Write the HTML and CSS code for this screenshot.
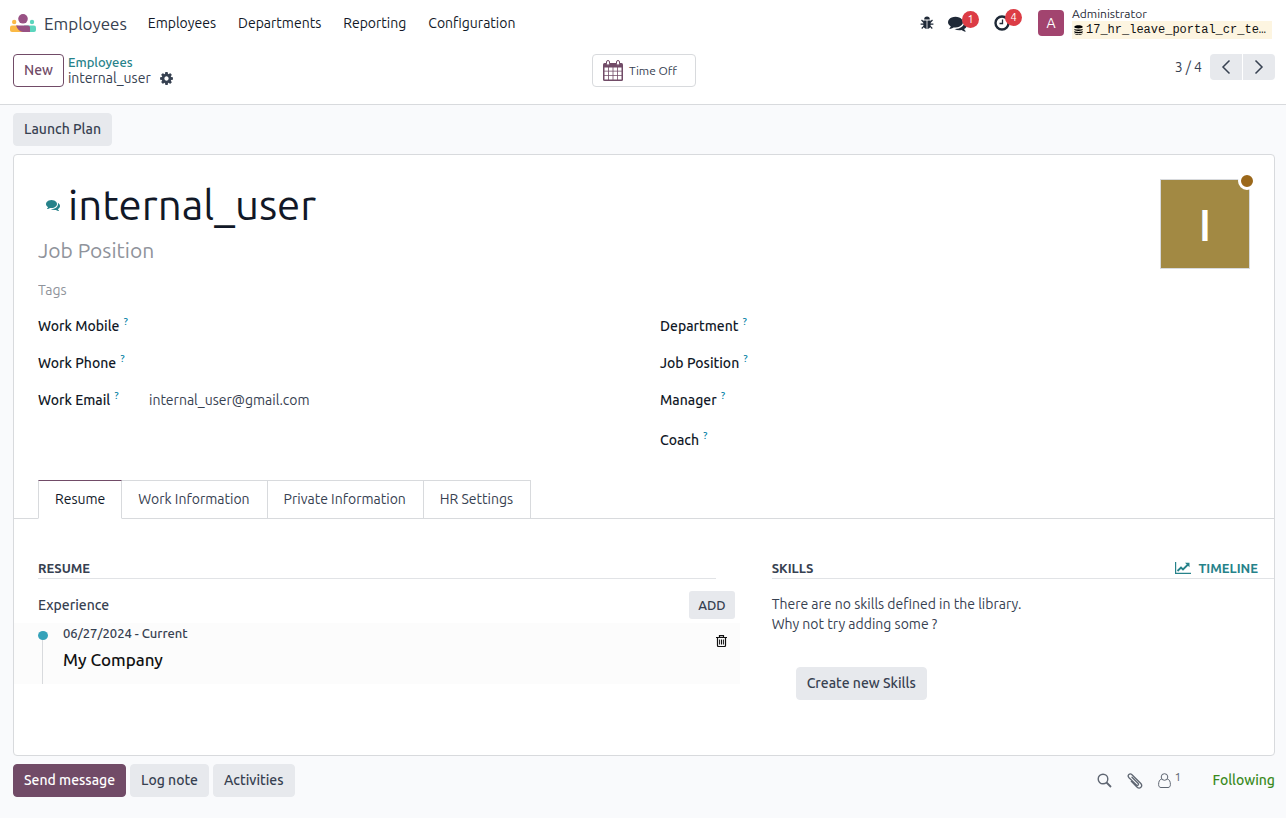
FILE: index.html
```html
<!DOCTYPE html>
<html lang="en">
<head>
<meta charset="utf-8">
<title>internal_user - Employees</title>
<link rel="stylesheet" href="styles.css">
</head>
<body>
<svg class="defs" aria-hidden="true">
  <symbol id="comments" viewBox="0 0 1792 1792"><path d="M1408 768q0 139-94 257t-256.500 186.500-353.500 68.500q-86 0-176-16-124 88-278 128-36 9-86 16h-3q-11 0-20.500-8t-11.500-21q-1-3-1-6.500t.5-6.500 2-6l2.500-5 3.500-5.500 4-5 4.500-5 4-4.500q5-6 23-25t26-29.500 22.500-29 25-38.500 20.500-44q-124-72-195-177t-71-224q0-139 94-257t256.500-186.500 353.500-68.500 353.500 68.500 256.500 186.500 94 257zm384 256q0 120-71 224.500t-195 176.500q10 24 20.500 44t25 38.500 22.500 29 26 29.500 23 25q1 1 4 4.500t4.500 5 4 5 3.500 5.500l2.500 5 2 6 .5 6.500-1 6.500q-3 14-13 22t-22 7q-50-7-86-16-154-40-278-128-90 16-176 16-271 0-472-132 58 4 88 4 161 0 309-45t264-129q125-92 192-212t67-254q0-77-23-152 129 71 204 178t75 230z"/></symbol>
</svg>

<header class="navbar">
  <a class="brand" href="#">
    <svg width="26" height="19" viewBox="0 0 26 19" aria-hidden="true">
      <circle cx="4.200" cy="8" r="2.200" fill="#fbb945"/><circle cx="22" cy="8" r="2.200" fill="#5bd5bd"/>
      <path d="M0 13.500q0-2 2-2h6l6 6.500H2q-2 0-2-2z" fill="#fbb945"/>
      <path d="M14 11.500h10q2 0 2 2V16q0 2-2 2h-7z" fill="#5bd5bd"/>
      <path d="M6 11.500h12q2 0 2 2V18h-7q-4.500 0-7-6.500z" fill="#985184"/>
      <circle cx="13" cy="4.800" r="4.800" fill="#985184"/>
    </svg>
    <span>Employees</span>
  </a>
  <nav class="menu">
    <a href="#">Employees</a><a href="#">Departments</a><a href="#">Reporting</a><a href="#">Configuration</a>
  </nav>
  <div class="systray">
    <button class="tray" aria-label="Developer tools">
      <svg width="14" height="14" viewBox="0 0 14 14" fill="none" stroke="currentColor" stroke-width="1.200"><path d="M4.200 3.400a2.800 2.800 0 0 1 5.600 0zM3.400 4.400h3.200v8.700q-3.200-.6-3.200-3.800zM7.400 4.400h3.200v4.900q0 3.200-3.200 3.800z" fill="currentColor" stroke="none"/><path d="M4 6.500 1.500 4M4 8.200H.6M4 10.200l-2.300 2.300M10 6.500 12.500 4M10 8.200h3.400M10 10.200l2.300 2.300"/></svg>
    </button>
    <button class="tray has-badge" aria-label="Messages"><svg class="icon-chat" width="19" height="19" fill="currentColor"><use href="#comments"/></svg><span class="badge">1</span></button>
    <button class="tray has-badge" aria-label="Activities">
      <svg width="16" height="16" viewBox="0 0 16 16" fill="none" stroke="currentColor"><circle cx="8" cy="8" r="6.500" stroke-width="2.400"/><path d="M8.500 4.500v4H5.500" stroke-width="1.300"/></svg><span class="badge">4</span>
    </button>
    <button class="user">
      <span class="user-avatar">A</span>
      <span class="user-text">
        <span class="user-name">Administrator</span>
        <span class="db">
          <svg width="9" height="10" viewBox="0 0 9 11" aria-hidden="true"><path d="M0 1.800C0-.4 9-.4 9 1.800v.7C9 4.200 0 4.200 0 2.500zM0 4c1.500 1.300 7.500 1.300 9 0v1.200c0 1.700-9 1.700-9 0zm0 2.700C1.500 8 7.500 8 9 6.700V8c0 1.600-9 1.600-9 0zm0 2.500c1.500 1.300 7.500 1.300 9 0 0 2.200-9 2.200-9 0z"/></svg>
          <span>17_hr_leave_portal_cr_te…</span>
        </span>
      </span>
    </button>
  </div>
</header>

<section class="control-panel">
  <div class="cp-left">
    <button class="btn btn-outline">New</button>
    <div class="crumbs">
      <a href="#">Employees</a>
      <div class="crumb-current"><span>internal_user</span>
        <button class="plain" aria-label="Actions"><svg width="15" height="15" viewBox="0 0 1792 1792" fill="currentColor"><path d="M1152 896q0-106-75-181t-181-75-181 75-75 181 75 181 181 75 181-75 75-181zm512-109v222q0 12-8 23t-20 13l-185 28q-19 54-39 91 35 50 107 138 10 12 10 25t-9 23q-27 37-99 108t-94 71q-12 0-26-9l-138-108q-44 23-91 38-16 136-29 186-7 28-36 28h-222q-14 0-24.500-8.500t-11.500-21.500l-28-184q-49-16-90-37l-141 107q-10 9-25 9-14 0-25-11-126-114-165-168-7-10-7-23 0-12 8-23 15-21 51-66.500t54-70.500q-27-50-41-99l-183-27q-13-2-21-12.500t-8-23.500v-222q0-12 8-23t19-13l186-28q14-46 39-92-40-57-107-138-10-12-10-24 0-10 9-23 26-36 98.500-107.500t94.500-71.500q13 0 26 10l138 107q44-23 91-38 16-136 29-186 7-28 36-28h222q14 0 24.500 8.500t11.500 21.500l28 184q49 16 90 37l142-107q9-9 24-9 13 0 25 10 129 119 165 170 7 8 7 22 0 12-8 23-15 21-51 66.500t-54 70.500q26 50 41 98l183 28q13 2 21 12.500t8 23.500z"/></svg></button>
      </div>
    </div>
  </div>
  <button class="stat">
    <svg width="20" height="21" viewBox="0 0 20 21" aria-hidden="true"><rect y="3" width="20" height="18" rx="1.500" fill="#714b67"/><path d="M1.500 7.500h3.700v3.200H1.500zm4.500 0h3.600v3.200H6zm4.400 0H14v3.200h-3.600zm4.400 0h3.700v3.200h-3.700zM1.500 11.500h3.700V15H1.500zm4.500 0h3.600V15H6zm4.400 0H14V15h-3.600zm4.400 0h3.700V15h-3.700zM1.500 15.800h3.700v3.700H1.500zm4.500 0h3.600v3.700H6zm4.400 0H14v3.700h-3.600zm4.400 0h3.700v3.700h-3.700z" fill="#fff"/><rect x="3.500" y=".5" width="3" height="4.700" rx="1.500" fill="#fff" stroke="#714b67"/><rect x="13.500" y=".5" width="3" height="4.700" rx="1.500" fill="#fff" stroke="#714b67"/></svg>
    <span>Time Off</span>
  </button>
  <div class="pager">
    <span>3 / 4</span>
    <div class="pager-buttons">
      <button aria-label="Previous"><svg width="10" height="16" viewBox="0 0 10 16"><path d="M8.500 1.500 2 8l6.500 6.500"/></svg></button>
      <button aria-label="Next"><svg width="10" height="16" viewBox="0 0 10 16"><path d="M1.500 1.500 8 8l-6.500 6.500"/></svg></button>
    </div>
  </div>
</section>

<main>
  <div class="statusbar"><button class="btn">Launch Plan</button></div>

  <article class="sheet">
    <div class="sheet-head">
      <div>
        <div class="title"><button class="plain teal" aria-label="Chat"><svg class="icon-chat" width="14" height="14" fill="currentColor"><use href="#comments"/></svg></button><h1>internal_user</h1></div>
        <input class="field job" placeholder="Job Position" aria-label="Job title">
        <input class="field tags" placeholder="Tags" aria-label="Tags">
      </div>
      <div class="photo"><span>I</span><i class="presence"></i></div>
    </div>

    <div class="groups">
      <div class="group">
        <label for="f1">Work Mobile <sup>?</sup></label><input class="field" id="f1">
        <label for="f2">Work Phone <sup>?</sup></label><input class="field" id="f2">
        <label for="f3">Work Email <sup>?</sup></label><input class="field" id="f3" value="internal_user@gmail.com">
      </div>
      <div class="group">
        <label for="f4">Department <sup>?</sup></label><input class="field" id="f4">
        <label for="f5">Job Position <sup>?</sup></label><input class="field" id="f5">
        <label for="f6">Manager <sup>?</sup></label><input class="field" id="f6">
        <label class="coach" for="f7">Coach <sup>?</sup></label><input class="field" id="f7">
      </div>
    </div>

    <div class="tabs" role="tablist">
      <button role="tab" class="active" aria-selected="true">Resume</button><button role="tab">Work Information</button><button role="tab">Private Information</button><button role="tab">HR Settings</button>
    </div>

    <div class="panes">
      <section class="resume">
        <h2>RESUME</h2>
        <div class="exp-head"><span>Experience</span><button class="btn-small">ADD</button></div>
        <div class="exp-row">
          <div class="line"></div>
          <div class="exp-text"><small>06/27/2024 - Current</small><strong>My Company</strong></div>
          <button class="plain trash" aria-label="Delete"><svg width="11" height="12" viewBox="0 0 11 12" fill="none" stroke="#111"><path d="M0 2.500h11M3.500 2V.6h4V2M1.500 3v7.500q0 1 1 1h6q1 0 1-1V3" stroke-width="1.200"/><path d="M3.600 4.500v5M5.500 4.500v5M7.400 4.500v5"/></svg></button>
        </div>
      </section>
      <section class="skills">
        <div class="skills-head"><h2>SKILLS</h2>
          <a href="#"><svg width="16" height="12" viewBox="0 0 16 12" fill="none" stroke="currentColor" aria-hidden="true"><path d="M.6 0v11.400H16" stroke-width="1.200"/><path d="m2.500 9 3.500-3.500L8 7.500l5-5" stroke-width="1.800"/><path d="M10 .7h4.500v4.500z" fill="currentColor" stroke="none"/></svg>TIMELINE</a></div>
        <p>There are no skills defined in the library.<br>Why not try adding some ?</p>
        <button class="btn create">Create new Skills</button>
      </section>
    </div>
  </article>

  <footer class="chatter">
    <button class="btn btn-primary">Send message</button><button class="btn">Log note</button><button class="btn">Activities</button>
    <div class="chatter-tools">
      <button class="plain" aria-label="Search"><svg width="15" height="15" viewBox="0 0 15 15" fill="none" stroke="currentColor"><circle cx="6" cy="6" r="4.800" stroke-width="1.400"/><path d="m9.500 9.500 4.500 4.500" stroke-width="1.800"/></svg></button>
      <button class="plain" aria-label="Attach files"><svg width="16" height="16" viewBox="0 0 16 16" fill="none" stroke="currentColor" stroke-width="1.300" stroke-linecap="round"><path d="M5 4.300 11 10.300c1.300 1.400-.3 2.900-1.600 1.600L2 4.700C-.2 2.400 2.800-.5 5 1.700l8.600 8.600c2.800 2.900-.8 6.500-3.700 3.700L4.300 8.400"/></svg></button>
      <button class="plain followers" aria-label="Followers"><svg width="13" height="15" viewBox="0 0 13 15" fill="none" stroke="currentColor"><circle cx="6.500" cy="4" r="3.300"/><path d="M3.700 6C1.500 6.500.6 8.600.6 11.500c0 2 .9 3 2.400 3h7c1.500 0 2.400-1 2.400-3 0-2.900-.9-5-3.100-5.500"/></svg><sup>1</sup></button>
      <button class="plain following">Following</button>
    </div>
  </footer>
</main>
</body>
</html>
```

FILE: styles.css
```css
* { box-sizing: border-box; }
body {
  margin: 0;
  background: #f9fafc;
  color: #374151;
  font: 14px/21px Ubuntu, "Noto Sans", sans-serif;
}
button, input { font: inherit; color: inherit; }
button { cursor: pointer; }
a { color: inherit; text-decoration: none; }
h1, h2, p { margin: 0; font-weight: 400; }
svg { display: block; flex: none; }
.defs { position: absolute; width: 0; height: 0; }

.navbar { display: flex; align-items: center; height: 46px; padding: 0 14px 0 10px; background: #fff; }
.brand { display: flex; align-items: center; gap: 8px; font-size: 17px; }
.menu { display: flex; gap: 22px; margin-left: 21px; color: #111827; }
.systray { display: flex; align-items: center; margin-left: auto; }
.tray { display: flex; align-items: center; padding: 0; border: 0; background: none; color: #1f2937; }
.has-badge { position: relative; margin-left: 14px; width: 31px; }
.has-badge + .has-badge { margin-left: 15px; width: 28px; }
.badge {
  position: absolute; bottom: 5px; right: 0;
  width: 17px; border-radius: 9px;
  background: #dc3c45; color: #fff;
  font-size: 11px; line-height: 17px; text-align: center;
}
.user { display: flex; align-items: center; gap: 8px; margin-left: 16px; padding: 0; border: 0; background: none; text-align: left; }
.user-avatar { width: 26px; border-radius: 4px; background: #a2446f; color: #fff; line-height: 26px; text-align: center; }
.user-text { width: 200px; font-size: 12px; line-height: 14px; color: #1f2937; }
.user-name { display: block; }
.db { display: flex; align-items: center; gap: 3px; height: 18px; padding: 0 2px; background: #fdf5e1; color: #111; font-family: "Liberation Mono", monospace; white-space: nowrap; }

.control-panel {
  display: grid; grid-template-columns: 1fr auto 1fr; align-items: start;
  height: 59px; padding: 8px 11px 0 13px;
  background: #fff; border-bottom: 1px solid #d8dadd;
}
.cp-left { display: flex; gap: 4px; }
.btn { padding: 5px 10px; border: 1px solid #e7e9ed; border-radius: 4px; background: #e7e9ed; font-weight: 500; white-space: nowrap; }
.btn-outline { background: #fff; border-color: #714b67; color: #714b67; }
.btn-primary { background: #714b67; border-color: #714b67; color: #fff; }
.crumbs { line-height: 16px; }
.crumbs a { display: block; color: #26828a; font-size: 13px; font-weight: 500; }
.crumb-current { display: flex; align-items: center; gap: 8px; }
.plain { display: block; padding: 0; border: 0; background: none; }
.teal { color: #26828a; }
.stat { display: flex; align-items: center; gap: 6px; padding: 5px 18px 5px 10px; border: 1px solid #d8dadd; border-radius: 4px; background: #fff; font-size: 12px; }
.pager { display: flex; justify-content: flex-end; align-items: center; gap: 8px; }
.pager-buttons { display: flex; gap: 1px; }
.pager-buttons button { display: grid; place-items: center; width: 32px; height: 26px; padding: 0; border: 0; border-radius: 4px 0 0 4px; background: #e7e9ed; }
.pager-buttons button + button { border-radius: 0 4px 4px 0; }
.pager-buttons path { fill: none; stroke: currentColor; stroke-width: 1.5; }

main { padding: 0 11px 21px 13px; }
.statusbar { padding: 8px 0; }
.sheet { padding-bottom: 55px; border: 1px solid #d8dadd; border-radius: 4px; background: #fff; }
.sheet-head { display: flex; justify-content: space-between; padding: 24px 24px 0; }
.title { display: flex; align-items: center; gap: 8px; padding-left: 8px; }
.title h1 { color: #111827; font-size: 42px; line-height: 52px; }
.field { display: block; width: 100%; min-width: 0; padding: 0; border: 0; background: none; outline: 0; }
.field::placeholder { color: #8f939b; opacity: 1; }
.job { height: 32px; margin-top: 3px; font-size: 21px; }
.tags { height: 24px; margin-top: 12px; }
.photo {
  position: relative; display: grid; place-items: center;
  width: 90px; height: 90px; border: 1px solid #d8dadd;
  background: #a28943; color: #fff; font: 600 44px/44px "Open Sans", sans-serif;
}
.presence { position: absolute; top: -8px; right: -7px; width: 18px; height: 18px; border: 3px solid #fff; border-radius: 50%; background: #9b681a; }

.groups { display: grid; grid-template-columns: 1fr 1fr; gap: 32px; padding: 6px 24px 0; }
.group { display: grid; grid-template-columns: 103px 1fr; column-gap: 8px; grid-auto-rows: 37px; align-content: start; align-items: center; }
.group label { color: #111827; font-weight: 500; white-space: nowrap; }
.group .coach, .group .coach + .field { margin-top: 6px; }
.group sup { margin-left: 1px; color: #0180a5; font-size: 10px; line-height: 10px; }

.tabs { display: flex; margin-top: 24px; padding-left: 24px; border-bottom: 1px solid #d8dadd; }
.tabs button { margin-bottom: -1px; padding: 8px 16px; border: 1px solid #d8dadd; border-left-width: 0; background: #fff; }
.tabs button + button { padding-right: 17px; }
.tabs .active { border-left-width: 1px; border-top-color: #714b67; border-bottom-color: #fff; color: #111827; }

.panes { display: grid; grid-template-columns: 13fr 9fr; gap: 32px; padding-top: 39px; }
h2 { font-size: 13px; font-weight: 700; line-height: 20px; }
.resume h2 { margin: 0 24px; border-bottom: 1px solid #e1e3e6; }
.exp-head { display: flex; justify-content: space-between; align-items: center; padding: 12px 5px 4px 24px; font-weight: 500; line-height: 20px; }
.btn-small { padding: 4px 9px; border: 0; border-radius: 3px; background: #e7e9ed; font-size: 13px; font-weight: 500; }
.exp-row { display: flex; padding-right: 13px; background: #fcfcfc; }
.line { position: relative; width: 1px; margin-left: 28px; margin-top: 12px; background: #d8dadd; }
.line::before { content: ""; position: absolute; top: -4px; left: -4px; width: 10px; height: 9px; border-radius: 50%; background: #35a2b9; }
.exp-text { flex: 1; padding: 0 0 12px 20px; }
.exp-text small { display: block; font-size: 13px; font-weight: 500; }
.exp-text strong { display: block; padding-top: 4px; color: #111; font-size: 17px; font-weight: 500; line-height: 24px; }
.trash { align-self: flex-start; padding-top: 12px; }
.skills-head { display: flex; justify-content: space-between; padding-right: 16px; border-bottom: 1px solid #e1e3e6; }
.skills-head a { display: flex; align-items: center; gap: 7px; color: #26828a; font-size: 13px; font-weight: 700; line-height: 20px; }
.skills p { padding-top: 15px; line-height: 20px; }
.create { margin: 33px 0 0 24px; }

.chatter { display: flex; gap: 4px; padding-top: 8px; }
.chatter-tools { display: flex; align-items: center; gap: 15px; margin-left: auto; color: #5f6672; }
.followers { display: flex; gap: 4px; }
.followers sup { font-size: 12px; line-height: 8px; }
.following { margin-left: 16px; color: #3b8a1e; font-weight: 500; }
```
